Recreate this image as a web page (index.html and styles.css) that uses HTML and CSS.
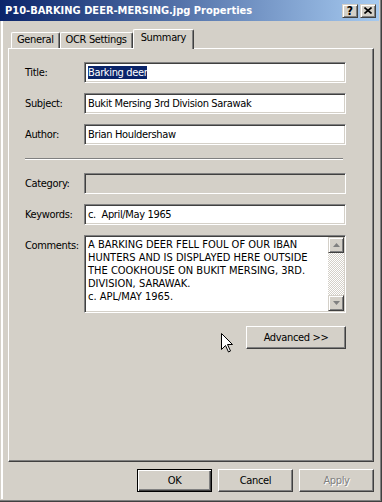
FILE: index.html
```html
<!DOCTYPE html>
<html>
<head>
<meta charset="utf-8">
<title>P10-BARKING DEER-MERSING.jpg Properties</title>
<link rel="stylesheet" href="styles.css">
</head>
<body>
<div class="window">
    <div class="titlebar">
        <span class="caption">P10-BARKING DEER-MERSING.jpg Properties</span>
        <div class="caption-buttons">
            <span class="cap-btn help">?</span>
            <span class="cap-btn">
                <svg width="8" height="7" viewBox="0 0 8 7"><path d="M0.5 0.5 L7.5 6.5 M7.5 0.5 L0.5 6.5" stroke="#000" stroke-width="1.6"/></svg>
            </span>
        </div>
    </div>
    <div class="client">
        <div class="tabs">
            <div class="tab">General</div>
            <div class="tab">OCR Settings</div>
            <div class="tab active">Summary</div>
        </div>
        <div class="panel">
            <div class="form">
                <label>Title:</label>
                <div class="field"><span class="selected">Barking deer</span></div>
                <label>Subject:</label>
                <div class="field">Bukit Mersing 3rd Division Sarawak</div>
                <label>Author:</label>
                <div class="field">Brian Houldershaw</div>
            </div>
            <div class="separator"></div>
            <div class="form">
                <label>Category:</label>
                <div class="field disabled"></div>
                <label>Keywords:</label>
                <div class="field">c.&nbsp; April/May 1965</div>
                <label class="top">Comments:</label>
                <div class="field memo">
                    <div class="memo-text">
                        A BARKING DEER FELL FOUL OF OUR IBAN<br>
                        HUNTERS AND IS DISPLAYED HERE OUTSIDE<br>
                        THE COOKHOUSE ON BUKIT MERSING, 3RD.<br>
                        DIVISION, SARAWAK.<br>
                        c. APL/MAY 1965.
                    </div>
                    <div class="scrollbar">
                        <span class="scroll-btn"><svg width="7" height="4" viewBox="0 0 7 4"><path d="M3.5 0 L7 4 L0 4 Z" fill="#808080"/></svg></span>
                        <span class="scroll-track"></span>
                        <span class="scroll-btn"><svg width="7" height="4" viewBox="0 0 7 4"><path d="M0 0 L7 0 L3.5 4 Z" fill="#808080"/></svg></span>
                    </div>
                </div>
            </div>
            <div class="advanced-row">
                <button class="btn advanced">Advanced &gt;&gt;</button>
            </div>
        </div>
        <div class="actions">
            <button class="btn default">OK</button>
            <button class="btn">Cancel</button>
            <button class="btn" disabled>Apply</button>
        </div>
    </div>
    <svg class="pointer" width="13" height="20" viewBox="0 0 13 20">
        <path d="M0.5 0.5 V16.5 L4.5 12.5 L7.5 19 L9.5 18 L6.5 11.5 H11.5 Z" fill="#fff" stroke="#000" stroke-width="1"/>
    </svg>
</div>
</body>
</html>
```

FILE: styles.css
```css
* {
    box-sizing: border-box;
}
body {
    margin: 0;
    background: #d4d0c8;
    font-family: "DejaVu Sans Condensed", "Liberation Sans", sans-serif;
    font-size: 11px;
    letter-spacing: -0.35px;
    color: #000;
}
.window {
    position: relative;
    width: 382px;
    height: 502px;
    display: flex;
    flex-direction: column;
    padding: 0 2px 2px 0;
    border-right: 1px solid #404040;
    border-bottom: 1px solid #404040;
    box-shadow: inset -1px -1px #808080;
    background: #d4d0c8;
}
.titlebar {
    height: 21px;
    display: flex;
    align-items: center;
    padding-left: 5px;
    background: linear-gradient(to right, #0a246a, #a6caf0);
    color: #fff;
    font-weight: bold;
    letter-spacing: 0;
}
.caption-buttons {
    margin-left: auto;
    margin-right: 3px;
    display: flex;
    gap: 2px;
}
.cap-btn {
    width: 16px;
    height: 14px;
    display: flex;
    align-items: center;
    justify-content: center;
    border: 1px solid;
    border-color: #d4d0c8 #404040 #404040 #d4d0c8;
    box-shadow: inset 1px 1px #fff, inset -1px -1px #808080;
    background: #d4d0c8;
    color: #000;
    font-size: 12px;
    font-weight: bold;
    line-height: 1;
}
.client {
    flex: 1;
    display: flex;
    flex-direction: column;
    padding: 0 5px 0 8px;
    box-shadow: inset 1px 0 #d4d0c8, inset 3px 0 #fff;
}

/* tabs */
.tabs {
    display: flex;
    align-items: flex-end;
    margin-top: 8px;
    padding-left: 3px;
}
.tab {
    height: 16px;
    padding: 0 5px;
    line-height: 14px;
    border: 1px solid;
    border-bottom: none;
    border-color: #fff #404040 #404040 #fff;
    border-radius: 2px 2px 0 0;
    box-shadow: inset -1px 0 #808080;
}
.tab.active {
    position: relative;
    z-index: 1;
    height: 20px;
    margin-bottom: -1px;
    padding: 0 7px;
    line-height: 16px;
    background: #d4d0c8;
}
.panel {
    flex: 1;
    padding: 13px 0 0 16px;
    border: 1px solid;
    border-color: #fff #404040 #404040 #fff;
    box-shadow: inset -1px -1px #808080;
}

/* form */
.form {
    display: grid;
    grid-template-columns: 59px 262px;
    row-gap: 10px;
    align-items: center;
}
.form label.top {
    align-self: start;
    padding-top: 4px;
}
.field {
    height: 21px;
    padding: 0 3px;
    line-height: 19px;
    white-space: nowrap;
    border: 1px solid;
    border-color: #808080 #fff #fff #808080;
    box-shadow: inset 1px 1px #404040, inset -1px -1px #d4d0c8;
    background: #fff;
}
.field.disabled {
    background: #d4d0c8;
}
.selected {
    display: inline-block;
    line-height: 13px;
    background: #0a246a;
    color: #fff;
}
.separator {
    width: 318px;
    height: 2px;
    margin: 13px 0;
    border-top: 1px solid #808080;
    border-bottom: 1px solid #fff;
}
.field.memo {
    height: 78px;
    padding: 0;
    display: flex;
}
.memo-text {
    flex: 1;
    padding: 2px 3px;
    line-height: 13px;
    letter-spacing: 0;
}
.scrollbar {
    width: 16px;
    margin: 1px 1px 1px 0;
    display: flex;
    flex-direction: column;
}
.scroll-btn {
    height: 16px;
    display: flex;
    align-items: center;
    justify-content: center;
    border: 1px solid;
    border-color: #d4d0c8 #404040 #404040 #d4d0c8;
    box-shadow: inset 1px 1px #fff, inset -1px -1px #808080;
    background: #d4d0c8;
}
.scroll-track {
    flex: 1;
    background: conic-gradient(#fff 25%, #d4d0c8 0 50%, #fff 0 75%, #d4d0c8 0);
    background-size: 2px 2px;
}

/* buttons */
.btn {
    width: 75px;
    height: 23px;
    padding: 0;
    font: inherit;
    letter-spacing: inherit;
    color: #000;
    background: #d4d0c8;
    border: 1px solid;
    border-color: #fff #404040 #404040 #fff;
    box-shadow: inset -1px -1px #808080;
}
.btn.default {
    border-color: #000;
    box-shadow: inset 1px 1px #fff, inset -1px -1px #404040, inset -2px -2px #808080;
}
.btn:disabled {
    color: #808080;
    text-shadow: 1px 1px #fff;
}
.advanced-row {
    width: 321px;
    margin-top: 13px;
    display: flex;
    justify-content: flex-end;
}
.btn.advanced {
    width: 100px;
}
.actions {
    display: flex;
    justify-content: flex-end;
    gap: 6px;
    margin: 7px 0;
}
.pointer {
    position: absolute;
    left: 221px;
    top: 333px;
}
```
